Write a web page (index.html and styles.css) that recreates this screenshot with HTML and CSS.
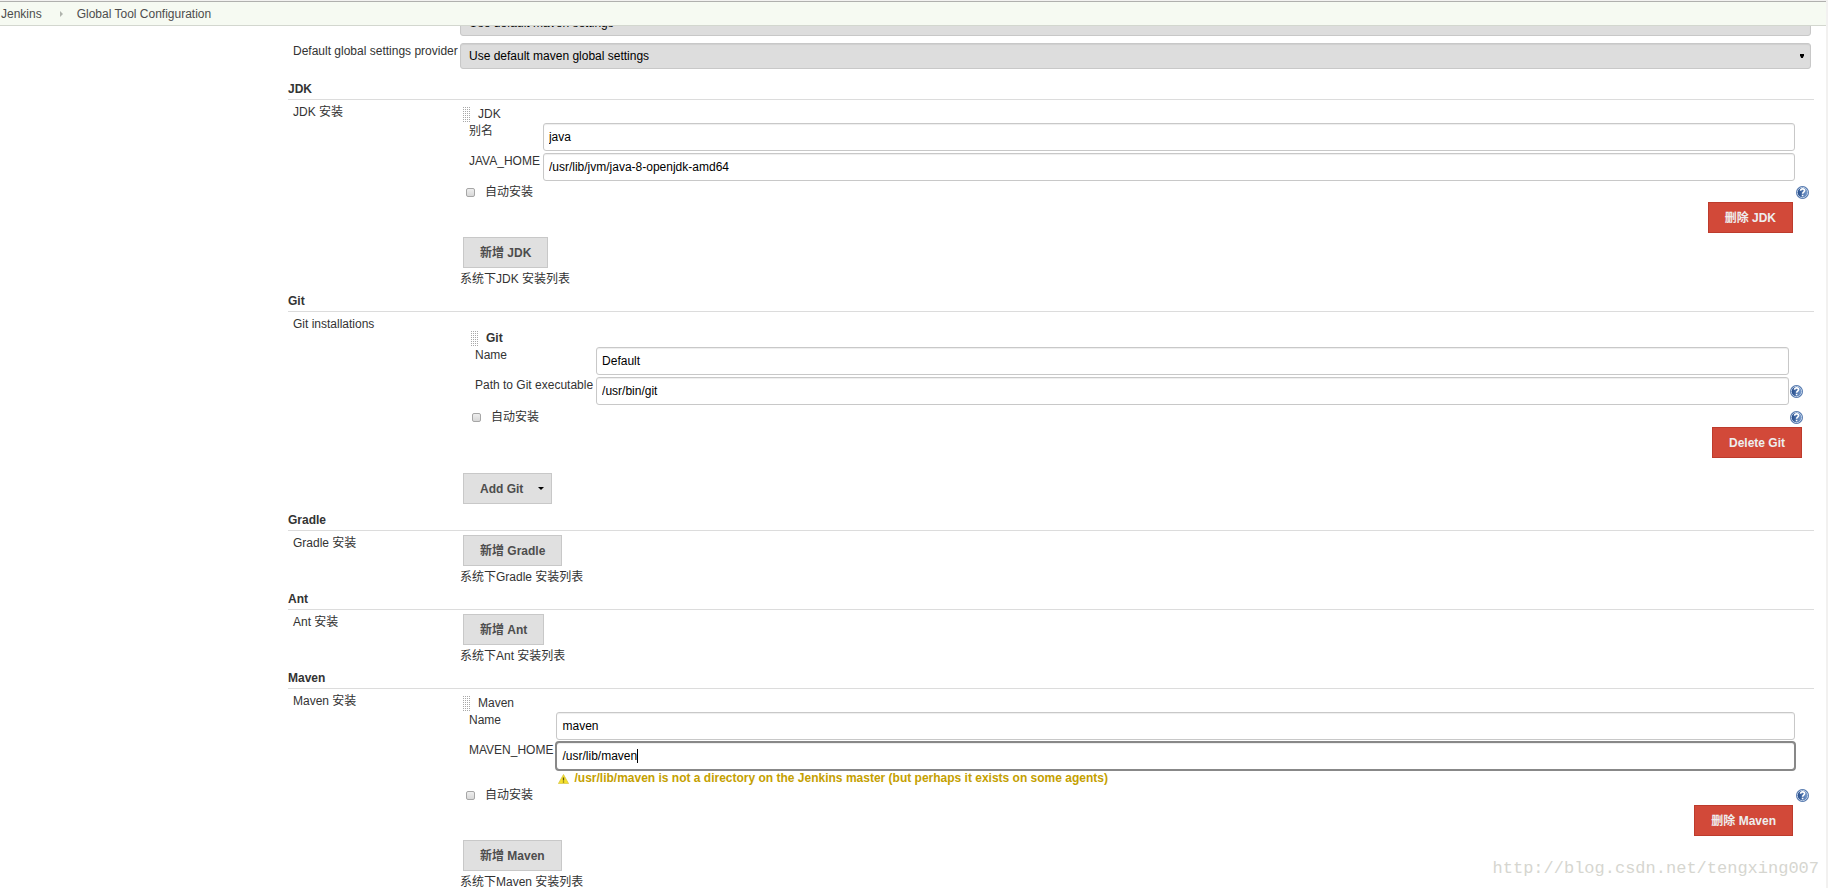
FILE: index.html
```html
<!DOCTYPE html>
<html lang="zh-CN">
<head>
<meta charset="utf-8">
<title>Global Tool Configuration [Jenkins]</title>
<link rel="stylesheet" href="styles.css">
</head>
<body>
<svg class="defs" aria-hidden="true">
  <defs>
    <linearGradient id="ball" x1="0" y1="0" x2="1" y2="0">
      <stop offset="0" stop-color="#1f4787"/>
      <stop offset="1" stop-color="#7c9fd0"/>
    </linearGradient>
    <pattern id="dots" width="2" height="2" patternUnits="userSpaceOnUse">
      <rect width="1" height="1" fill="#a8a8a8"/>
    </pattern>
    <symbol id="help" viewBox="0 0 13 13">
      <circle cx="6.5" cy="6.5" r="6.5" fill="#4a70a8"/>
      <circle cx="6.5" cy="6.5" r="5.2" fill="url(#ball)" stroke="#c3d2e8" stroke-width=".9"/>
      <path d="M4.6 4.8C4.7 3.4 5.6 2.9 6.6 2.9C7.8 2.9 8.6 3.6 8.6 4.6C8.6 6 6.7 6.1 6.6 7.7M6.6 8.8V10.3" fill="none" stroke="#fff" stroke-width="1.6"/>
    </symbol>
    <symbol id="grip" viewBox="0 0 8 15">
      <rect width="8" height="15" fill="url(#dots)"/>
    </symbol>
  </defs>
</svg>

<header class="topbar">
  <nav class="crumbs">
    <a href="#">Jenkins</a>
    <svg class="crumb-sep" viewBox="0 0 4 6"><path d="M0 0L3 3L0 6Z" fill="#b0b4ad"/></svg>
    <a href="#">Global Tool Configuration</a>
  </nav>
</header>

<main class="page">
  <form class="config">
    <div class="selects">
      <div class="row">
        <div class="row-label"></div>
        <div class="select-wrap">
          <select id="settings" aria-label="Default settings provider"><option>Use default maven settings</option></select>
        </div>
      </div>
      <div class="row">
        <label class="row-label" for="gsettings">Default global settings provider</label>
        <div class="select-wrap">
          <select id="gsettings"><option>Use default maven global settings</option></select>
          <svg class="select-arrow" viewBox="0 0 4 4"><path d="M0 0H4V1.5L2.8 4H1.2L0 1.5Z" fill="#000"/></svg>
        </div>
      </div>
    </div>

    <section>
      <h2>JDK</h2>
      <div class="row">
        <div class="row-label">JDK 安装</div>
        <div class="content">
          <div class="item">
            <div class="item-head"><svg class="grip"><use href="#grip"/></svg><span>JDK</span></div>
            <div class="fields">
              <label for="jdk-name">别名</label>
              <div class="field"><input id="jdk-name" type="text" value="java"></div>
              <label for="jdk-home">JAVA_HOME</label>
              <div class="field"><input id="jdk-home" type="text" value="/usr/lib/jvm/java-8-openjdk-amd64"></div>
            </div>
            <div class="auto">
              <input id="jdk-auto" type="checkbox"><label for="jdk-auto">自动安装</label>
              <svg class="help"><use href="#help"/></svg>
            </div>
            <div class="remove"><button type="button" class="btn danger">删除 JDK</button></div>
          </div>
          <button type="button" class="btn add">新增 JDK</button>
          <p class="desc">系统下JDK 安装列表</p>
        </div>
      </div>
    </section>

    <section>
      <h2>Git</h2>
      <div class="row">
        <div class="row-label">Git installations</div>
        <div class="content">
          <div class="item boxed">
            <div class="item-head"><svg class="grip"><use href="#grip"/></svg><b>Git</b></div>
            <div class="fields">
              <label for="git-name">Name</label>
              <div class="field"><input id="git-name" type="text" value="Default"></div>
              <label for="git-path">Path to Git executable</label>
              <div class="field"><input id="git-path" type="text" value="/usr/bin/git"><svg class="help"><use href="#help"/></svg></div>
            </div>
            <div class="auto">
              <input id="git-auto" type="checkbox"><label for="git-auto">自动安装</label>
              <svg class="help"><use href="#help"/></svg>
            </div>
            <div class="remove"><button type="button" class="btn danger">Delete Git</button></div>
          </div>
          <button type="button" class="btn add menu">Add Git<svg class="menu-arrow" viewBox="0 0 6 3"><path d="M0 0H6L3 3Z" fill="#000"/></svg></button>
        </div>
      </div>
    </section>

    <section>
      <h2>Gradle</h2>
      <div class="row">
        <div class="row-label">Gradle 安装</div>
        <div class="content">
          <button type="button" class="btn add">新增 Gradle</button>
          <p class="desc">系统下Gradle 安装列表</p>
        </div>
      </div>
    </section>

    <section>
      <h2>Ant</h2>
      <div class="row">
        <div class="row-label">Ant 安装</div>
        <div class="content">
          <button type="button" class="btn add">新增 Ant</button>
          <p class="desc">系统下Ant 安装列表</p>
        </div>
      </div>
    </section>

    <section>
      <h2>Maven</h2>
      <div class="row">
        <div class="row-label">Maven 安装</div>
        <div class="content">
          <div class="item">
            <div class="item-head"><svg class="grip"><use href="#grip"/></svg><span>Maven</span></div>
            <div class="fields">
              <label for="mvn-name">Name</label>
              <div class="field"><input id="mvn-name" type="text" value="maven"></div>
              <label for="mvn-home">MAVEN_HOME</label>
              <div class="field"><input id="mvn-home" class="focused" type="text" value="/usr/lib/maven"><span class="caret"></span></div>
              <div class="warning">
                <svg class="warn-icon" viewBox="0 0 11 10"><path d="M5.5 .5L10.6 9.6H.4Z" fill="#f6e12c" stroke="#d9c84a" stroke-width=".8" stroke-linejoin="round"/><path d="M5.5 3.6V6.6M5.5 7.4V8.6" stroke="#5b5312" stroke-width="1.3"/></svg>
                <span>/usr/lib/maven is not a directory on the Jenkins master (but perhaps it exists on some agents)</span>
              </div>
            </div>
            <div class="auto">
              <input id="mvn-auto" type="checkbox"><label for="mvn-auto">自动安装</label>
              <svg class="help"><use href="#help"/></svg>
            </div>
            <div class="remove"><button type="button" class="btn danger">删除 Maven</button></div>
          </div>
          <button type="button" class="btn add">新增 Maven</button>
          <p class="desc">系统下Maven 安装列表</p>
        </div>
      </div>
    </section>
  </form>
</main>
<div class="watermark">http://blog.csdn.net/tengxing007</div>
</body>
</html>
```
FILE: styles.css
```css
* { box-sizing: border-box; }

body {
  margin: 0;
  height: 100vh;
  overflow: hidden;
  display: flex;
  flex-direction: column;
  border-right: 2px solid #f2f1f0;
  background: #fff;
  color: #333;
  font: 12px/16px "Liberation Sans", "Noto Sans CJK SC", sans-serif;
}

input, select, button { font: inherit; }
svg { display: block; flex: none; }
.defs { position: absolute; width: 0; height: 0; }

/* breadcrumb bar */
.topbar {
  flex: none;
  border-top: 1px solid #f2f1f0;
  margin-right: -2px;
}
.crumbs {
  display: flex;
  align-items: center;
  height: 25px;
  padding-left: 1px;
  margin-right: 2px;
  border-top: 1px solid #b0b0ae;
  border-bottom: 1px solid #d3d7cf;
  background: #f6faf2;
}
.crumbs a { color: #4d4d4d; text-decoration: none; }
.crumb-sep { width: 4px; height: 6px; margin: 0 13px 0 18px; }

/* form layout */
.page {
  flex: 1;
  min-height: 0;
  overflow: hidden;
  padding: 0 12px 0 288px;
}
.selects {
  display: grid;
  gap: 7px;
  margin: -16px 3px 6px 0;
}
.row {
  display: grid;
  grid-template-columns: 172px 1fr;
}
.row-label { padding: 4px 0 0 5px; white-space: nowrap; }
.selects .row-label { padding-top: 0; }
.content { padding-right: 3px; }

h2 {
  margin: 0;
  padding: 6px 0 2px;
  border-bottom: 1px solid #dcdcdc;
  font-size: 12px;
  line-height: 16px;
  font-weight: bold;
}

.select-wrap { position: relative; }
select {
  display: block;
  width: 100%;
  height: 26px;
  padding: 0 8px;
  appearance: none;
  border: 1px solid #c8c8c8;
  border-radius: 3px;
  background: #ddd;
  box-shadow: inset 0 1px 1px #cfcfcf;
  color: #000;
}
.select-arrow {
  position: absolute;
  top: 11px;
  right: 7px;
  width: 4px;
  height: 4px;
}

/* one tool installation */
.item { padding-bottom: 4px; }
.item-head {
  display: flex;
  gap: 7px;
  padding: 6px 0 1px 3px;
}
.grip { width: 8px; height: 15px; margin-top: 1px; }

.fields {
  display: grid;
  grid-template-columns: auto 1fr;
  row-gap: 2px;
  padding-left: 9px;
}
.fields label { padding-right: 3px; }
.field {
  position: relative;
  display: flex;
  align-items: center;
  padding-right: 16px;
}
.field .help { margin: 1px -14px 0 1px; }
input[type="text"] {
  flex: 1;
  min-width: 0;
  height: 28px;
  padding: 0 5px;
  border: 1px solid #c8c8c8;
  border-radius: 3px;
  background: #fff;
  box-shadow: inset 0 1px 1px #eee;
  color: #000;
}
input.focused { outline: 2px solid #888; outline-offset: -1px; }
.caret {
  position: absolute;
  top: 7px;
  left: 81px;
  width: 1px;
  height: 14px;
  background: #000;
}
.help { width: 13px; height: 13px; }

.warning {
  grid-column: 2;
  display: flex;
  gap: 5px;
  padding-left: 2px;
  line-height: 12px;
  font-weight: bold;
  color: #c4a000;
}
.warn-icon { width: 11px; height: 10px; margin-top: 2px; }

.auto {
  display: flex;
  align-items: center;
  gap: 10px;
  padding: 3px 2px 2px 6px;
}
.auto .help { margin-left: auto; }
input[type="checkbox"] {
  width: 9px;
  height: 9px;
  margin: 0;
  appearance: none;
  border: 1px solid #a6a6a6;
  border-radius: 2px;
  background: linear-gradient(#eee, #d8d8d8);
}

.remove {
  display: flex;
  justify-content: flex-end;
  padding-right: 18px;
}
.btn {
  height: 31px;
  padding: 0 16px;
  border: 1px solid #c8c8c8;
  background: #e0e0e0;
  color: #4d4d4d;
  font-weight: bold;
}
.danger {
  border-color: #bd3b2c;
  background: #d24939;
  color: #eee;
}
.add { display: block; margin: 0 0 3px 3px; }
.row-label + .content > .add:first-child { margin-top: 4px; }
.menu {
  display: flex;
  align-items: center;
  gap: 15px;
  padding-right: 7px;
  margin-bottom: 2px;
}
.menu-arrow { width: 6px; height: 3px; }
.desc { margin: 0; }

/* framed variant used by Git */
.boxed { padding: 12px 6px 15px; }
.boxed .item-head { padding-left: 5px; }
.boxed .fields { padding-bottom: 1px; }
.boxed .remove { padding-right: 3px; }

.watermark {
  position: absolute;
  right: 9px;
  bottom: 7px;
  color: #d6d6d0;
  font: 17px/24px "Liberation Mono", monospace;
}
```
